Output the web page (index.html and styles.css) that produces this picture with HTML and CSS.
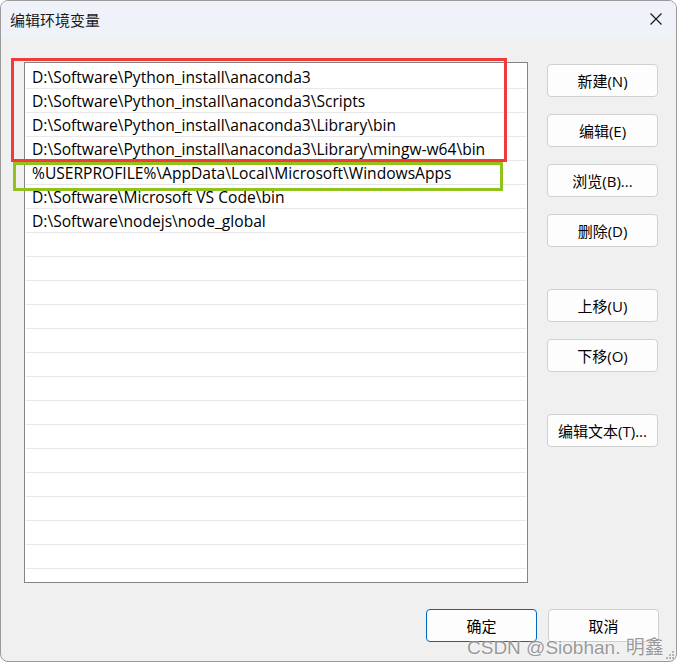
FILE: index.html
```html
<!DOCTYPE html>
<html lang="zh-CN">
<head>
    <meta charset="UTF-8">
    <title>编辑环境变量</title>
    <link rel="stylesheet" href="styles.css">
</head>
<body>

    <div class="window">
        <div class="titlebar">
            <span class="title">编辑环境变量</span>
            <svg class="close" width="14" height="14" viewBox="0 0 14 14">
                <path d="M1.5 1.5 L12.5 12.5 M12.5 1.5 L1.5 12.5" stroke="#1a1a1a" stroke-width="1.2" fill="none"/>
            </svg>
        </div>

        <div class="content">
            <div class="main">
                <div class="list">
                    <div class="row">D:\Software\Python_install\anaconda3</div>
                    <div class="row">D:\Software\Python_install\anaconda3\Scripts</div>
                    <div class="row">D:\Software\Python_install\anaconda3\Library\bin</div>
                    <div class="row">D:\Software\Python_install\anaconda3\Library\mingw-w64\bin</div>
                    <div class="row">%USERPROFILE%\AppData\Local\Microsoft\WindowsApps</div>
                    <div class="row">D:\Software\Microsoft VS Code\bin</div>
                    <div class="row">D:\Software\nodejs\node_global</div>
                    <div class="row"></div>
                    <div class="row"></div>
                    <div class="row"></div>
                    <div class="row"></div>
                    <div class="row"></div>
                    <div class="row"></div>
                    <div class="row"></div>
                    <div class="row"></div>
                    <div class="row"></div>
                    <div class="row"></div>
                    <div class="row"></div>
                    <div class="row"></div>
                    <div class="row"></div>
                    <div class="row"></div>
                </div>

                <div class="side">
                    <button class="btn">新建(N)</button>
                    <button class="btn">编辑(E)</button>
                    <button class="btn">浏览(B)...</button>
                    <button class="btn">删除(D)</button>
                    <button class="btn gap">上移(U)</button>
                    <button class="btn">下移(O)</button>
                    <button class="btn gap">编辑文本(T)...</button>
                </div>
            </div>

            <div class="footer">
                <button class="btn primary">确定</button>
                <button class="btn">取消</button>
            </div>
        </div>

        <!-- annotation boxes drawn over the list -->
        <div class="mark mark-red"></div>
        <div class="mark mark-green"></div>

        <div class="watermark">CSDN @Siobhan. 明鑫</div>

        <svg class="grip" width="10" height="10" viewBox="0 0 10 10">
            <rect x="7" y="1" width="2" height="2" fill="#b5b5b5"/>
            <rect x="4" y="4" width="2" height="2" fill="#b5b5b5"/>
            <rect x="7" y="4" width="2" height="2" fill="#b5b5b5"/>
            <rect x="1" y="7" width="2" height="2" fill="#b5b5b5"/>
            <rect x="4" y="7" width="2" height="2" fill="#b5b5b5"/>
            <rect x="7" y="7" width="2" height="2" fill="#b5b5b5"/>
        </svg>
    </div>

</body>
</html>
```

FILE: styles.css
```css
body {
    margin: 0;
    background: #ffffff;
    font-family: "Open Sans", "Noto Sans CJK SC", sans-serif;
    color: #000;
}
.window {
    position: relative;
    width: 677px;
    height: 662px;
    box-sizing: border-box;
    border: 1px solid #9a9a9a;
    border-radius: 8px;
    background: #f0f0f0;
    display: flex;
    flex-direction: column;
    overflow: hidden;
}
.titlebar {
    height: 36px;
    flex-shrink: 0;
    background: #eff3f9;
    display: flex;
    align-items: center;
    justify-content: space-between;
    padding: 0 13px 0 9px;
}
.title {
    font-family: "Noto Sans CJK SC", sans-serif;
    font-size: 15px;
    color: #1a1a1a;
}
.close {
    display: block;
}
.content {
    padding: 25px 17px 0 23px;
}
.main {
    display: flex;
    gap: 19px;
}
.list {
    width: 504px;
    height: 521px;
    box-sizing: border-box;
    border: 1px solid #848484;
    background: #fff;
    padding-top: 2px;
    overflow: hidden;
}
.row {
    height: 23px;
    line-height: 24px;
    margin: 0 1px;
    padding-left: 6px;
    border-bottom: 1px solid #e8e8e8;
    font-size: 15.6px;
    white-space: nowrap;
    color: #000;
}
.side {
    display: flex;
    flex-direction: column;
    padding-top: 2px;
    gap: 17px;
}
.btn {
    width: 111px;
    height: 33px;
    box-sizing: border-box;
    border: 1px solid #d0d0d0;
    border-radius: 4px;
    background: #fdfdfd;
    font-family: "Open Sans", "Noto Sans CJK SC", sans-serif;
    font-size: 15px;
    color: #000;
    padding: 0;
}
.btn.gap {
    margin-top: 25px;
}
.btn.primary {
    border-color: #0067c0;
}
.footer {
    display: flex;
    justify-content: flex-end;
    gap: 11px;
    margin-top: 26px;
}
.mark {
    position: absolute;
    box-sizing: border-box;
    border: 3px solid #f23a3a;
}
.mark-red {
    left: 10px;
    top: 57px;
    width: 496px;
    height: 104px;
}
.mark-green {
    left: 12px;
    top: 161px;
    width: 490px;
    height: 29px;
    border-color: #92c21c;
}
.watermark {
    position: absolute;
    left: 466px;
    top: 631px;
    font-family: "Liberation Sans", "Noto Sans CJK SC", sans-serif;
    font-size: 19px;
    color: rgba(120, 120, 120, 0.75);
    text-shadow: 0 0 2px #fff;
    white-space: nowrap;
}
.grip {
    position: absolute;
    right: 1px;
    bottom: 1px;
}
```
